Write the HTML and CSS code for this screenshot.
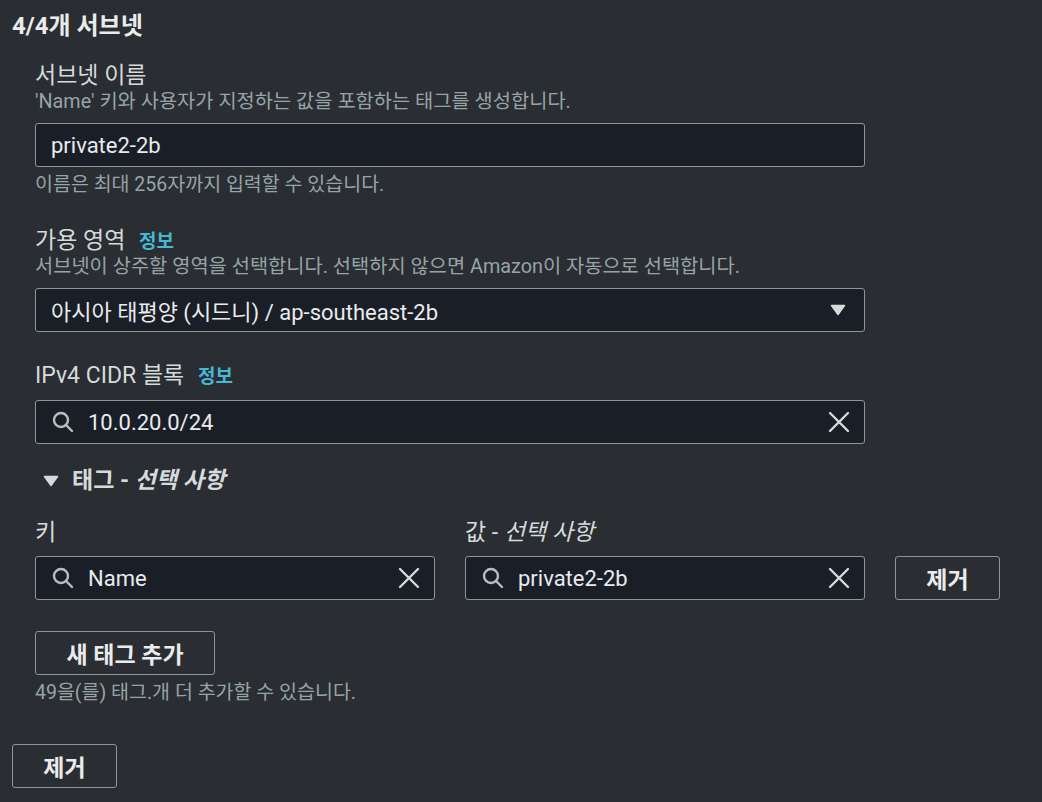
FILE: index.html
```html
<!DOCTYPE html>
<html lang="ko">
<head>
<meta charset="utf-8">
<link rel="stylesheet" href="styles.css">
</head>
<body>
<div class="page">
  <h2 class="title">4/4개 서브넷</h2>
  <div class="fields">
    <div class="field">
      <div class="label">서브넷 이름</div>
      <div class="desc">'Name' 키와 사용자가 지정하는 값을 포함하는 태그를 생성합니다.</div>
      <div class="input"><span class="value">private2-2b</span></div>
      <div class="hint">이름은 최대 256자까지 입력할 수 있습니다.</div>
    </div>
    <div class="field">
      <div class="label">가용 영역 <a class="info">정보</a></div>
      <div class="desc">서브넷이 상주할 영역을 선택합니다. 선택하지 않으면 Amazon이 자동으로 선택합니다.</div>
      <div class="input select"><span class="value">아시아 태평양 (시드니) / ap-southeast-2b</span>
        <svg class="caret" width="16" height="12" viewBox="0 0 16 12"><path d="M1.5 1.5 H14.5 L8 10.5 Z" fill="#d5dbdb" stroke="#d5dbdb" stroke-width="1.5" stroke-linejoin="round"/></svg>
      </div>
    </div>
    <div class="field">
      <div class="label">IPv4 CIDR 블록 <a class="info">정보</a></div>
      <div class="input search">
        <svg class="search-icon" width="22" height="22" viewBox="0 0 22 22"><circle cx="9" cy="9" r="7" fill="none" stroke="#b6bebe" stroke-width="2.4"/><path d="M14 14 L20 20" stroke="#b6bebe" stroke-width="2.4" stroke-linecap="round"/></svg>
        <span class="value">10.0.20.0/24</span>
        <svg class="clear" width="22" height="22" viewBox="0 0 22 22"><path d="M2 2 L20 20 M20 2 L2 20" stroke="#d5dbdb" stroke-width="2.4" stroke-linecap="round"/></svg>
      </div>
    </div>
    <div class="tags-head">
      <svg class="tri" width="16" height="12" viewBox="0 0 16 12"><path d="M1.5 1.5 H14.5 L8 10.5 Z" fill="#d5dbdb" stroke="#d5dbdb" stroke-width="1.5" stroke-linejoin="round"/></svg>
      <span>태그 - <em>선택 사항</em></span>
    </div>
    <div class="tag-row">
      <div class="tag-col">
        <div class="label">키</div>
        <div class="input search">
          <svg class="search-icon" width="22" height="22" viewBox="0 0 22 22"><circle cx="9" cy="9" r="7" fill="none" stroke="#b6bebe" stroke-width="2.4"/><path d="M14 14 L20 20" stroke="#b6bebe" stroke-width="2.4" stroke-linecap="round"/></svg>
          <span class="value">Name</span>
          <svg class="clear" width="22" height="22" viewBox="0 0 22 22"><path d="M2 2 L20 20 M20 2 L2 20" stroke="#d5dbdb" stroke-width="2.4" stroke-linecap="round"/></svg>
        </div>
      </div>
      <div class="tag-col">
        <div class="label">값 - <em>선택 사항</em></div>
        <div class="input search">
          <svg class="search-icon" width="22" height="22" viewBox="0 0 22 22"><circle cx="9" cy="9" r="7" fill="none" stroke="#b6bebe" stroke-width="2.4"/><path d="M14 14 L20 20" stroke="#b6bebe" stroke-width="2.4" stroke-linecap="round"/></svg>
          <span class="value">private2-2b</span>
          <svg class="clear" width="22" height="22" viewBox="0 0 22 22"><path d="M2 2 L20 20 M20 2 L2 20" stroke="#d5dbdb" stroke-width="2.4" stroke-linecap="round"/></svg>
        </div>
      </div>
      <button class="btn btn-remove-tag">제거</button>
    </div>
    <button class="btn btn-add">새 태그 추가</button>
    <div class="hint hint-tags">49을(를) 태그.개 더 추가할 수 있습니다.</div>
  </div>
  <button class="btn btn-remove">제거</button>
</div>
</body>
</html>
```

FILE: styles.css
```css
html, body {
  margin: 0;
  padding: 0;
  background: #2a2d32;
  height: 100%;
}
body {
  font-family: "Roboto", "Noto Sans CJK KR", sans-serif;
  color: #d5dbdb;
}
.page {
  padding: 10px 12px 0 12px;
}
.title {
  margin: 0;
  font-size: 24px;
  font-weight: 700;
  line-height: 32px;
  color: #e9ebed;
}
.fields {
  padding-left: 23px;
  padding-top: 20px;
}
.field {
  width: 830px;
  margin-bottom: 30px;
}
.label {
  font-size: 23px;
  line-height: 28px;
  color: #d5dbdb;
  white-space: nowrap;
}
.info {
  color: #44b9d6;
  font-weight: 700;
  font-size: 19px;
  line-height: 1;
  margin-left: 8px;
}
.desc {
  font-size: 19.8px;
  line-height: 24px;
  color: #95a5a6;
  margin-bottom: 9px;
  white-space: nowrap;
}
.field > .label + .input {
  margin-top: 10px;
}
.input {
  box-sizing: border-box;
  height: 44px;
  background: #1a1f27;
  border: 1px solid #8d9696;
  border-radius: 3px;
  display: flex;
  align-items: center;
  padding: 0 15px;
  font-size: 22px;
  color: #e9ebed;
  white-space: nowrap;
}
.value {
  flex: 1;
}
.search {
  padding: 0 14px 0 16px;
}
.search-icon {
  margin-right: 14px;
}
.caret {
  margin-right: 3px;
}
.hint {
  font-size: 19.5px;
  line-height: 24px;
  color: #95a5a6;
  margin-top: 6px;
  white-space: nowrap;
}
.tags-head {
  display: flex;
  align-items: center;
  font-size: 23px;
  font-weight: 700;
  line-height: 28px;
  color: #d5dbdb;
  margin-top: 23px;
  margin-left: 8px;
}
.field:nth-of-type(3) {
  margin-bottom: 0;
}
.tri {
  margin-right: 13px;
}
em {
  font-style: italic;
}
.tag-row {
  display: flex;
  align-items: flex-end;
  gap: 30px;
  margin-top: 24px;
}
.tag-col {
  width: 400px;
}
.tag-col .label {
  margin-bottom: 9px;
}
.btn {
  box-sizing: border-box;
  background: transparent;
  border: 1px solid #8d9696;
  border-radius: 3px;
  color: #e9ebed;
  font-family: inherit;
  font-size: 23px;
  font-weight: 700;
  height: 44px;
  padding: 0;
  cursor: pointer;
}
.btn-remove-tag {
  width: 105px;
}
.btn-add {
  display: block;
  width: 180px;
  margin-top: 31px;
}
.btn-remove {
  width: 105px;
  margin-top: 39px;
}
```
